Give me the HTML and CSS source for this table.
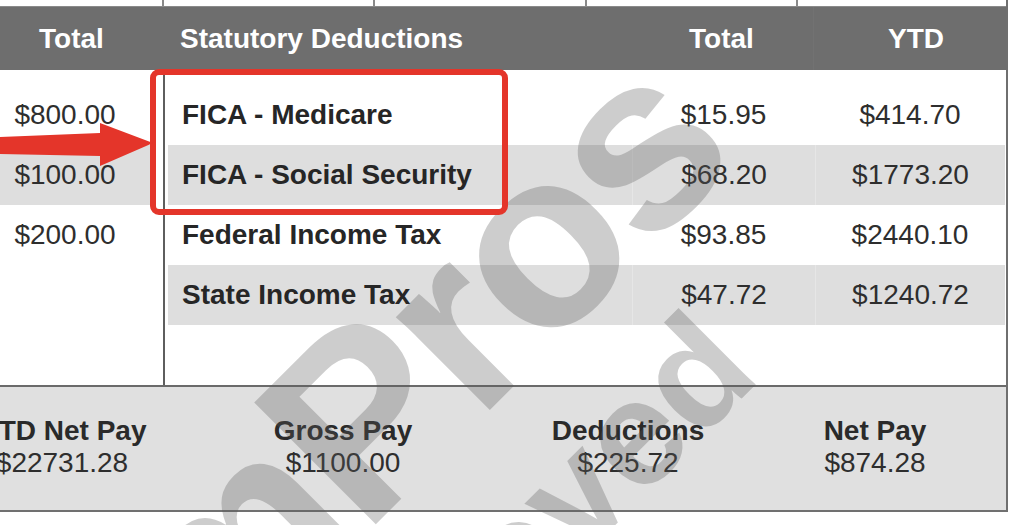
FILE: index.html
```html
<!DOCTYPE html>
<html>
<head>
<meta charset="utf-8">
<link rel="stylesheet" href="styles.css">
</head>
<body>
<div class="stage">
  <div class="sheet">
    <div class="prev-row">
      <div class="pc"></div><div class="pc"></div><div class="pc"></div><div class="pc"></div><div class="pc last"></div>
    </div>
    <div class="head">
      <div class="hc">Total</div>
      <div class="hc left">Statutory Deductions</div>
      <div class="hc">Total</div>
      <div class="hc ytd">YTD</div>
    </div>
    <div class="body">
      <div class="earn">
        <div class="erow">$800.00</div>
        <div class="erow alt">$100.00</div>
        <div class="erow">$200.00</div>
      </div>
      <div class="deds">
        <div class="drow"><div class="dl">FICA - Medicare</div><div class="da">$15.95</div><div class="da">$414.70</div></div>
        <div class="drow alt"><div class="dl">FICA - Social Security</div><div class="da">$68.20</div><div class="da">$1773.20</div></div>
        <div class="drow"><div class="dl">Federal Income Tax</div><div class="da">$93.85</div><div class="da">$2440.10</div></div>
        <div class="drow alt"><div class="dl">State Income Tax</div><div class="da">$47.72</div><div class="da">$1240.72</div></div>
      </div>
    </div>
    <div class="summary">
      <div class="sc"><div class="sl">YTD Net Pay</div><div class="sv">$22731.28</div></div>
      <div class="sc"><div class="sl">Gross Pay</div><div class="sv">$1100.00</div></div>
      <div class="sc"><div class="sl">Deductions</div><div class="sv">$225.72</div></div>
      <div class="sc net"><div class="sl">Net Pay</div><div class="sv">$874.28</div></div>
    </div>
  </div>

  <div class="wm wm1">mPros</div>
  <div class="wm wm2">removed</div>

  <div class="redbox"></div>
  <svg class="arrow" width="160" height="60" viewBox="0 0 160 60">
    <polygon points="0,17 100,13 100,3 153,23 100,46 100,36 0,34" fill="#e4352a"/>
  </svg>
</div>
</body>
</html>
```

FILE: styles.css
```css
html, body {
  margin: 0;
  padding: 0;
  background: #ffffff;
}
body {
  width: 1024px;
  height: 525px;
  overflow: hidden;
  font-family: "Liberation Sans", Arial, Helvetica, sans-serif;
  color: #2a2a2a;
}
.stage {
  position: relative;
  width: 1024px;
  height: 525px;
  overflow: hidden;
}
.sheet {
  margin-left: -20px;
  width: 1028px;
  box-sizing: border-box;
  border-right: 2px solid #6f6f6f;
}

/* remnant of table above */
.prev-row {
  display: grid;
  grid-template-columns: 184px 211px 212px 211px 1fr;
  height: 6px;
  border-bottom: 1px solid #8a8a8a;
}
.pc {
  border-right: 2px solid #8a8a8a;
}
.pc.last { border-right: none; }

/* header */
.head {
  display: grid;
  grid-template-columns: 183px 467px 183px 1fr;
  height: 63px;
  background: #6e6e6e;
  color: #ffffff;
  font-weight: bold;
  font-size: 28px;
  align-items: center;
}
.hc {
  text-align: center;
}
.hc.left {
  text-align: left;
  padding-left: 17px;
}
.hc.ytd {
  border-left: 1px solid #727272;
  height: 100%;
  display: flex;
  align-items: center;
  justify-content: center;
  padding-left: 12px;
}

/* body */
.body {
  display: grid;
  grid-template-columns: 185px 1fr;
  height: 315px;
  border-bottom: 2px solid #6a6a6a;
}
.earn {
  border-right: 2px solid #5e5e5e;
  padding-top: 15px;
}
.erow {
  height: 60px;
  margin-right: 8px;
  padding-right: 5px;
  display: flex;
  align-items: center;
  justify-content: center;
  font-size: 28px;
  color: #2e2e2e;
}
.alt {
  background: #dedede;
}
.deds {
  padding: 15px 1px 0 3px;
}
.drow {
  display: grid;
  grid-template-columns: 464px 183px 1fr;
  height: 60px;
  align-items: stretch;
  font-size: 28px;
}
.dl {
  display: flex;
  align-items: center;
  padding-left: 14px;
  font-weight: bold;
  color: #262626;
}
.da {
  display: flex;
  align-items: center;
  justify-content: center;
  color: #2e2e2e;
}
.drow.alt .da {
  border-left: 1px solid #e6e6e6;
}

/* summary */
.summary {
  display: grid;
  grid-template-columns: 164px 398px 172px 1fr;
  height: 123px;
  background: #e0e0e0;
  border-bottom: 2px solid #707070;
  align-items: center;
  font-size: 28px;
  line-height: 32px;
}
.sc {
  text-align: center;
  white-space: nowrap;
  padding-bottom: 4px;
}
.sc.net {
  padding-left: 30px;
}
.sl {
  font-weight: bold;
  color: #2a2a2a;
}
.sv {
  color: #2e2e2e;
}

/* watermark */
.wm {
  position: absolute;
  left: 0;
  top: 0;
  font-family: "Liberation Sans", Arial, sans-serif;
  font-weight: bold;
  color: rgba(90, 90, 90, 0.3);
  white-space: nowrap;
  transform-origin: 0 0;
  line-height: 1;
  pointer-events: none;
}
.wm1 {
  font-size: 250px;
  letter-spacing: -6px;
  transform: translate(212px, 690px) rotate(-45deg) translate(0, -0.85em);
}
.wm2 {
  font-size: 150px;
  transform: translate(321px, 820px) rotate(-45deg) translate(0, -0.85em);
}

/* annotations */
.redbox {
  position: absolute;
  left: 150px;
  top: 69px;
  width: 358px;
  height: 146px;
  box-sizing: border-box;
  border: 6px solid #e4352a;
  border-radius: 9px;
}
.arrow {
  position: absolute;
  left: 0;
  top: 120px;
}
```
